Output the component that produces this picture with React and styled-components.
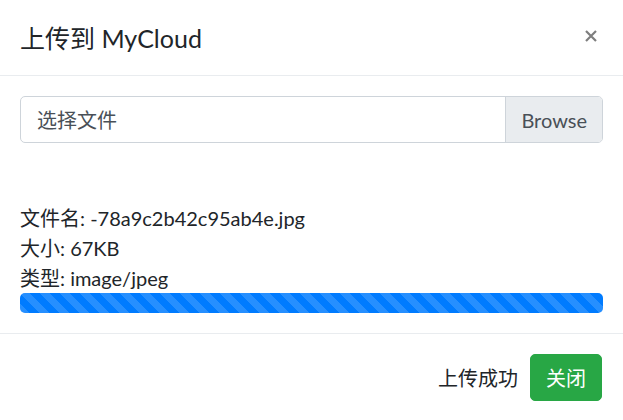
import React from 'react';
import styled, { createGlobalStyle } from 'styled-components';

const Global = createGlobalStyle`
  html, body {
    margin: 0;
    padding: 0;
    background: #fff;
  }
  body {
    font-family: "Segoe UI", Lato, "Noto Sans CJK SC", sans-serif;
    font-size: 20px;
    color: #212529;
  }
`;

const Modal = styled.div`
  width: 623px;
  height: 420px;
  background: #fff;
  display: flex;
  flex-direction: column;
`;

const Header = styled.div`
  height: 76px;
  box-sizing: border-box;
  padding: 0 20px;
  display: flex;
  align-items: center;
  justify-content: space-between;
  border-bottom: 1px solid #e9ecef;
`;

const Title = styled.h5`
  margin: 0;
  font-size: 25px;
  font-weight: 400;
  line-height: 1.2;
`;

const Close = styled.button`
  background: none;
  border: 0;
  padding: 0;
  margin: 0 6px 4px 0;
  width: 12px;
  height: 12px;
  display: flex;
  cursor: pointer;
  opacity: 0.5;
`;

const Body = styled.div`
  padding: 20px;
  display: flex;
  flex-direction: column;
`;

const FileInput = styled.label`
  display: flex;
  height: 47px;
  box-sizing: border-box;
  border: 1px solid #ced4da;
  border-radius: 5px;
  overflow: hidden;
  color: #495057;
`;

const FileLabel = styled.span`
  flex: 1;
  display: flex;
  align-items: center;
  padding: 0 16px;
`;

const BrowseBtn = styled.span`
  display: flex;
  align-items: center;
  padding: 0 15px;
  background: #e9ecef;
  border-left: 1px solid #ced4da;
`;

const Info = styled.div`
  margin-top: 60px;
  line-height: 30px;
`;

const Progress = styled.div`
  height: 20px;
  border-radius: 5px;
  overflow: hidden;
  background: #e9ecef;
`;

const Bar = styled.div`
  height: 100%;
  background-color: #007bff;
  background-image: linear-gradient(
    45deg,
    rgba(255, 255, 255, 0.15) 25%,
    transparent 25%,
    transparent 50%,
    rgba(255, 255, 255, 0.15) 50%,
    rgba(255, 255, 255, 0.15) 75%,
    transparent 75%,
    transparent
  );
  background-size: 20px 20px;
`;

const Footer = styled.div`
  border-top: 1px solid #e9ecef;
  padding: 20px 21px 18px 20px;
  display: flex;
  justify-content: flex-end;
  align-items: center;
  gap: 12px;
`;

const Status = styled.span``;

const Button = styled.button`
  height: 47px;
  padding: 0 15px;
  font-size: 20px;
  font-family: inherit;
  color: #fff;
  background: ${p => (p.variant === 'success' ? '#28a745' : '#6c757d')};
  border: 1px solid ${p => (p.variant === 'success' ? '#28a745' : '#6c757d')};
  border-radius: 5px;
  cursor: pointer;
`;

const App = () => {
  const file = { name: '-78a9c2b42c95ab4e.jpg', size: '67KB', type: 'image/jpeg' };
  const progress = 100;

  return (
    <>
      <Global />
      <Modal>
        <Header>
          <Title>上传到 MyCloud</Title>
          <Close aria-label="Close">
            <svg width="12" height="12" viewBox="0 0 12 12">
              <path d="M1 1 L11 11 M11 1 L1 11" stroke="#000" strokeWidth="2.2" strokeLinecap="butt" />
            </svg>
          </Close>
        </Header>
        <Body>
          <FileInput>
            <FileLabel>选择文件</FileLabel>
            <BrowseBtn>Browse</BrowseBtn>
          </FileInput>
          <Info>
            <div>文件名: {file.name}</div>
            <div>大小: {file.size}</div>
            <div>类型: {file.type}</div>
          </Info>
          <Progress>
            <Bar style={{ width: `${progress}%` }} />
          </Progress>
        </Body>
        <Footer>
          <Status>上传成功</Status>
          <Button variant="success">关闭</Button>
        </Footer>
      </Modal>
    </>
  );
};

export default App;
